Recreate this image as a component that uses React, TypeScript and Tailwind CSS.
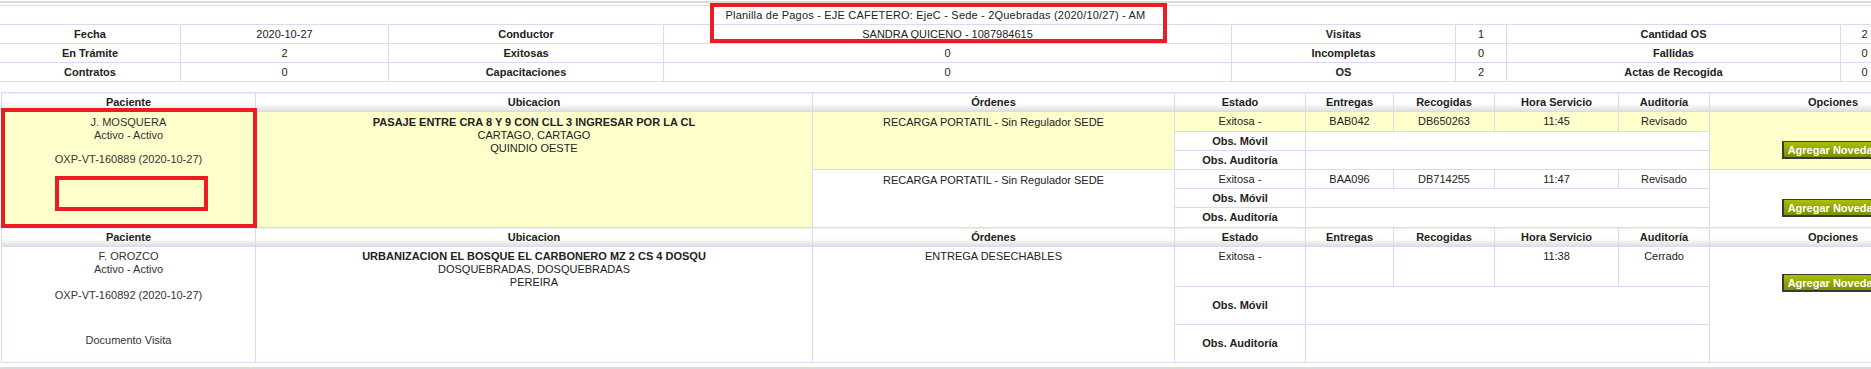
import React from "react";

const td = "border border-[#d9d9f3] p-0 text-center leading-[13px]";
const th =
  "border border-[#d9d9f3] p-0 text-center font-bold leading-[13px] bg-[linear-gradient(to_bottom,#ffffff_0%,#ffffff_55%,#dedede_100%)]";
const Y = " bg-[#ffffcc]";

function Btn() {
  return (
    <button
      type="button"
      className="inline-block h-[18px] px-[4px] leading-[14px] text-[11px] text-white font-bold bg-[linear-gradient(to_bottom,#acc000,#7d8e00)] border border-[#3a3a3a] border-l-2 border-b-2 whitespace-nowrap"
    >
      Agregar Novedad
    </button>
  );
}

function SumCell({ children, bold }: { children?: React.ReactNode; bold?: boolean }) {
  return (
    <div
      className={
        "flex items-center justify-center border-r border-[#d9d9f3] whitespace-nowrap" +
        (bold ? " font-bold" : "")
      }
    >
      {children}
    </div>
  );
}

const summary: [string, string, string, string, string, string, string, string][] = [
  ["Fecha", "2020-10-27", "Conductor", "SANDRA QUICENO - 1087984615", "Visitas", "1", "Cantidad OS", "2"],
  ["En Trámite", "2", "Exitosas", "0", "Incompletas", "0", "Fallidas", "0"],
  ["Contratos", "0", "Capacitaciones", "0", "OS", "2", "Actas de Recogida", "0"],
];

function Header() {
  return (
    <tr className="h-[19px]">
      <th className={th}>Paciente</th>
      <th className={th}>Ubicacion</th>
      <th className={th}>Órdenes</th>
      <th className={th}>Estado</th>
      <th className={th}>Entregas</th>
      <th className={th}>Recogidas</th>
      <th className={th}>Hora Servicio</th>
      <th className={th}>Auditoría</th>
      <th className={th}>Opciones</th>
    </tr>
  );
}

export default function App() {
  return (
    <div className="relative w-[1871px] h-[369px] overflow-hidden bg-white text-[11px] text-[#222] font-['Liberation_Sans',Arial,sans-serif]">
      {/* top lines */}
      <div className="mt-[1px] h-[2px] w-full bg-[#dadada]" />
      <div className="mt-[2px] w-full border-t border-[#d9d9f3]" />
      <div className="h-[19px] w-full flex items-center justify-center border-b border-[#d9d9f3] whitespace-nowrap tracking-[0.2px]">
        Planilla de Pagos - EJE CAFETERO: EjeC - Sede - 2Quebradas (2020/10/27) - AM
      </div>

      {/* summary */}
      <div className="w-[1889px]">
        {summary.map((r, i) => (
          <div
            key={i}
            className="grid grid-cols-[181px_208px_275px_568px_224px_51px_334px_48px] h-[19px] border-b border-[#d9d9f3]"
          >
            <SumCell bold>{r[0]}</SumCell>
            <SumCell>{r[1]}</SumCell>
            <SumCell bold>{r[2]}</SumCell>
            <SumCell>{r[3]}</SumCell>
            <SumCell bold>{r[4]}</SumCell>
            <SumCell>{r[5]}</SumCell>
            <SumCell bold>{r[6]}</SumCell>
            <SumCell>{r[7]}</SumCell>
          </div>
        ))}
      </div>

      {/* main table */}
      <table className="ml-[1px] mt-[10px] border-collapse table-fixed w-[1955px]">
        <colgroup>
          <col className="w-[254px]" />
          <col className="w-[557px]" />
          <col className="w-[362px]" />
          <col className="w-[131px]" />
          <col className="w-[88px]" />
          <col className="w-[101px]" />
          <col className="w-[124px]" />
          <col className="w-[91px]" />
          <col className="w-[247px]" />
        </colgroup>
        <tbody>
          <Header />
          {/* group 1 */}
          <tr className="h-[20px]">
            <td rowSpan={6} className={td + Y + " align-top pt-[4px] text-[#333]"}>
              <div>J. MOSQUERA</div>
              <div>Activo - Activo</div>
              <div className="mt-[11px]">OXP-VT-160889 (2020-10-27)</div>
            </td>
            <td rowSpan={6} className={td + Y + " align-top pt-[4px]"}>
              <div className="font-bold">PASAJE ENTRE CRA 8 Y 9 CON CLL 3 INGRESAR POR LA CL</div>
              <div>CARTAGO, CARTAGO</div>
              <div>QUINDIO OESTE</div>
            </td>
            <td rowSpan={3} className={td + Y + " align-top pt-[4px]"}>
              RECARGA PORTATIL - Sin Regulador SEDE
            </td>
            <td className={td + Y}>Exitosa -</td>
            <td className={td + Y}>BAB042</td>
            <td className={td + Y}>DB650263</td>
            <td className={td + Y}>11:45</td>
            <td className={td + Y}>Revisado</td>
            <td rowSpan={3} className={td + Y + " align-top pt-[29px]"}>
              <Btn />
            </td>
          </tr>
          <tr className="h-[19px]">
            <td className={td + " font-bold"}>Obs. Móvil</td>
            <td colSpan={4} className={td}></td>
          </tr>
          <tr className="h-[19px]">
            <td className={td + " font-bold"}>Obs. Auditoría</td>
            <td colSpan={4} className={td}></td>
          </tr>
          <tr className="h-[19px]">
            <td rowSpan={3} className={td + " align-top pt-[4px]"}>
              RECARGA PORTATIL - Sin Regulador SEDE
            </td>
            <td className={td}>Exitosa -</td>
            <td className={td}>BAA096</td>
            <td className={td}>DB714255</td>
            <td className={td}>11:47</td>
            <td className={td}>Revisado</td>
            <td rowSpan={3} className={td + " align-top pt-[29px]"}>
              <Btn />
            </td>
          </tr>
          <tr className="h-[19px]">
            <td className={td + " font-bold"}>Obs. Móvil</td>
            <td colSpan={4} className={td}></td>
          </tr>
          <tr className="h-[20px]">
            <td className={td + " font-bold"}>Obs. Auditoría</td>
            <td colSpan={4} className={td}></td>
          </tr>

          <Header />
          {/* group 2 */}
          <tr className="h-[40px]">
            <td rowSpan={3} className={td + " align-top pt-[3px] text-[#333]"}>
              <div>F. OROZCO</div>
              <div>Activo - Activo</div>
              <div className="mt-[13px]">OXP-VT-160892 (2020-10-27)</div>
              <div className="mt-[32px]">Documento Visita</div>
            </td>
            <td rowSpan={3} className={td + " align-top pt-[3px]"}>
              <div className="font-bold">URBANIZACION EL BOSQUE EL CARBONERO MZ 2 CS 4 DOSQU</div>
              <div>DOSQUEBRADAS, DOSQUEBRADAS</div>
              <div>PEREIRA</div>
            </td>
            <td rowSpan={3} className={td + " align-top pt-[3px]"}>
              ENTREGA DESECHABLES
            </td>
            <td className={td + " align-top pt-[3px]"}>Exitosa -</td>
            <td className={td + " align-top pt-[3px]"}></td>
            <td className={td + " align-top pt-[3px]"}></td>
            <td className={td + " align-top pt-[3px]"}>11:38</td>
            <td className={td + " align-top pt-[3px]"}>Cerrado</td>
            <td rowSpan={3} className={td + " align-top pt-[27px]"}>
              <Btn />
            </td>
          </tr>
          <tr className="h-[38px]">
            <td className={td + " font-bold"}>Obs. Móvil</td>
            <td colSpan={4} className={td}></td>
          </tr>
          <tr className="h-[38px]">
            <td className={td + " font-bold"}>Obs. Auditoría</td>
            <td colSpan={4} className={td}></td>
          </tr>
        </tbody>
      </table>
      <div className="mt-[4px] h-[2px] w-full bg-[#dadada]" />

      {/* red annotation boxes */}
      <div className="absolute left-[710px] top-[3px] w-[457px] h-[40px] border-4 border-[#ed1c24]" />
      <div className="absolute left-[1px] top-[108px] w-[256px] h-[120px] border-4 border-[#ed1c24]" />
      <div className="absolute left-[55px] top-[176px] w-[153px] h-[35px] border-4 border-[#ed1c24]" />
    </div>
  );
}
